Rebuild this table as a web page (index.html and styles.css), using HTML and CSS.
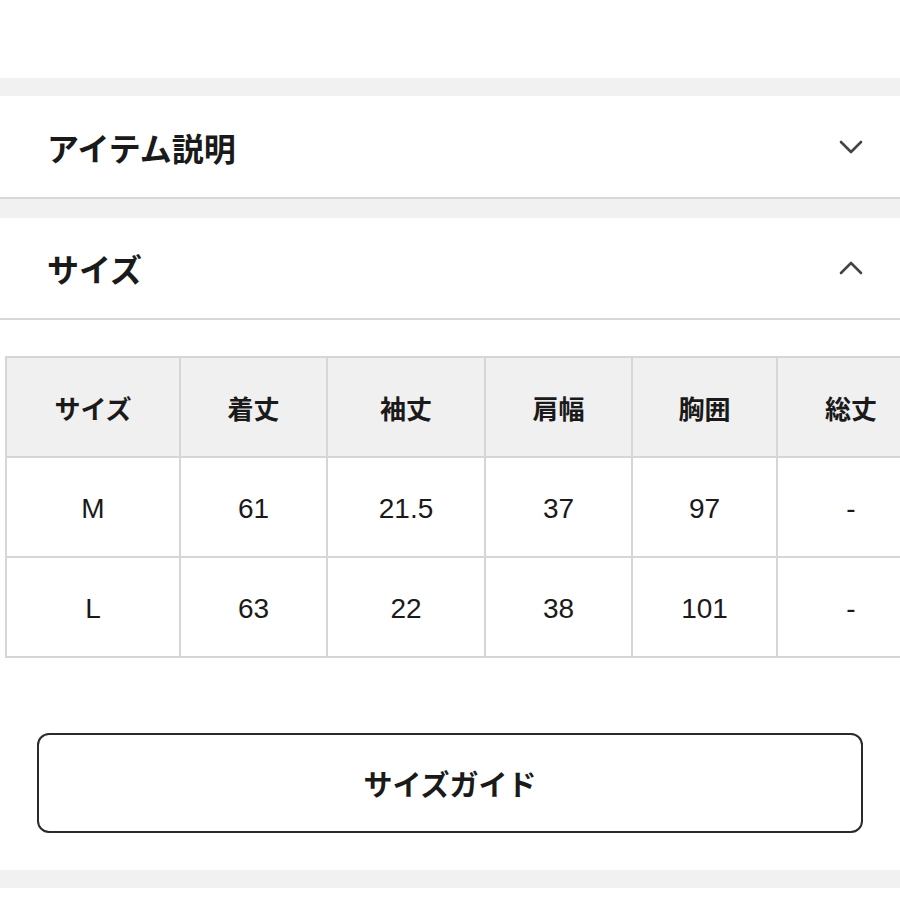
FILE: index.html
```html
<!DOCTYPE html>
<html lang="ja">
<head>
<meta charset="utf-8">
<link rel="stylesheet" href="styles.css">
</head>
<body>
<div class="page">
  <div class="top-space"></div>
  <div class="band"></div>
  <section class="acc">
    <div class="acc-head">
      <h2 class="acc-title">アイテム説明</h2>
      <svg class="chev" width="24" height="14" viewBox="0 0 24 14"><path d="M2 2 L12 12 L22 2" fill="none" stroke="#444" stroke-width="2.6" stroke-linecap="round" stroke-linejoin="round"/></svg>
    </div>
  </section>
  <div class="band band2"></div>
  <section class="acc">
    <div class="acc-head">
      <h2 class="acc-title">サイズ</h2>
      <svg class="chev" width="24" height="14" viewBox="0 0 24 14"><path d="M2 12 L12 2 L22 12" fill="none" stroke="#444" stroke-width="2.6" stroke-linecap="round" stroke-linejoin="round"/></svg>
    </div>
    <div class="acc-body">
      <table class="size-table">
        <colgroup>
          <col class="c1"><col class="c2"><col class="c3"><col class="c4"><col class="c5"><col class="c6">
        </colgroup>
        <thead>
          <tr><th>サイズ</th><th>着丈</th><th>袖丈</th><th>肩幅</th><th>胸囲</th><th>総丈</th></tr>
        </thead>
        <tbody>
          <tr><td>M</td><td>61</td><td>21.5</td><td>37</td><td>97</td><td>-</td></tr>
          <tr><td>L</td><td>63</td><td>22</td><td>38</td><td>101</td><td>-</td></tr>
        </tbody>
      </table>
      <div class="btn-wrap">
        <button class="guide-btn">サイズガイド</button>
      </div>
    </div>
  </section>
  <div class="band band3"></div>
</div>
</body>
</html>
```
FILE: styles.css
```css
html, body {
  margin: 0;
  padding: 0;
  background: #fff;
  overflow: hidden;
}
body {
  font-family: "Liberation Sans", "Noto Sans CJK JP", sans-serif;
  color: #1a1a1a;
  width: 900px;
  height: 900px;
}
.page {
  width: 900px;
}
.top-space {
  height: 78px;
}
.band {
  height: 18px;
  background: #f1f1f1;
}
.band2 {
  height: 19px;
}
.band3 {
  margin-top: 37px;
  height: 18px;
}
.acc-head {
  border-bottom: 2px solid #d8d8d8;
  display: flex;
  align-items: center;
  justify-content: space-between;
  padding: 0 37px 0 47px;
  box-sizing: border-box;
  height: 103px;
}
.band2 + .acc .acc-head {
  height: 102px;
}
.acc-title {
  margin: 0;
  font-size: 32px;
  font-weight: 700;
  font-family: "Noto Sans CJK JP", sans-serif;
  letter-spacing: 0;
}
.chev {
  display: block;
}
.acc-body {
  padding-top: 36px;
}
.size-table {
  margin-left: 5px;
  border-collapse: collapse;
  table-layout: fixed;
  width: 919px;
}
.c1 { width: 174px; }
.c2 { width: 147px; }
.c3 { width: 158px; }
.c4 { width: 147px; }
.c5 { width: 145px; }
.c6 { width: 148px; }
.size-table th,
.size-table td {
  border: 2px solid #d6d6d6;
  height: 100px;
  padding: 0;
  text-align: center;
  vertical-align: middle;
  box-sizing: border-box;
}
.size-table th {
  background: #f0f0f0;
  font-family: "Noto Sans CJK JP", sans-serif;
  font-weight: 700;
  font-size: 26px;
}
.size-table td {
  font-size: 28px;
  font-weight: 400;
  padding-top: 4px;
}
.btn-wrap {
  padding: 75px 37px 0 37px;
}
.guide-btn {
  display: block;
  width: 826px;
  height: 100px;
  background: #fff;
  border: 2px solid #2a2a2a;
  border-radius: 12px;
  font-family: "Noto Sans CJK JP", sans-serif;
  font-weight: 700;
  font-size: 29px;
  color: #1a1a1a;
  padding: 0;
}
```
